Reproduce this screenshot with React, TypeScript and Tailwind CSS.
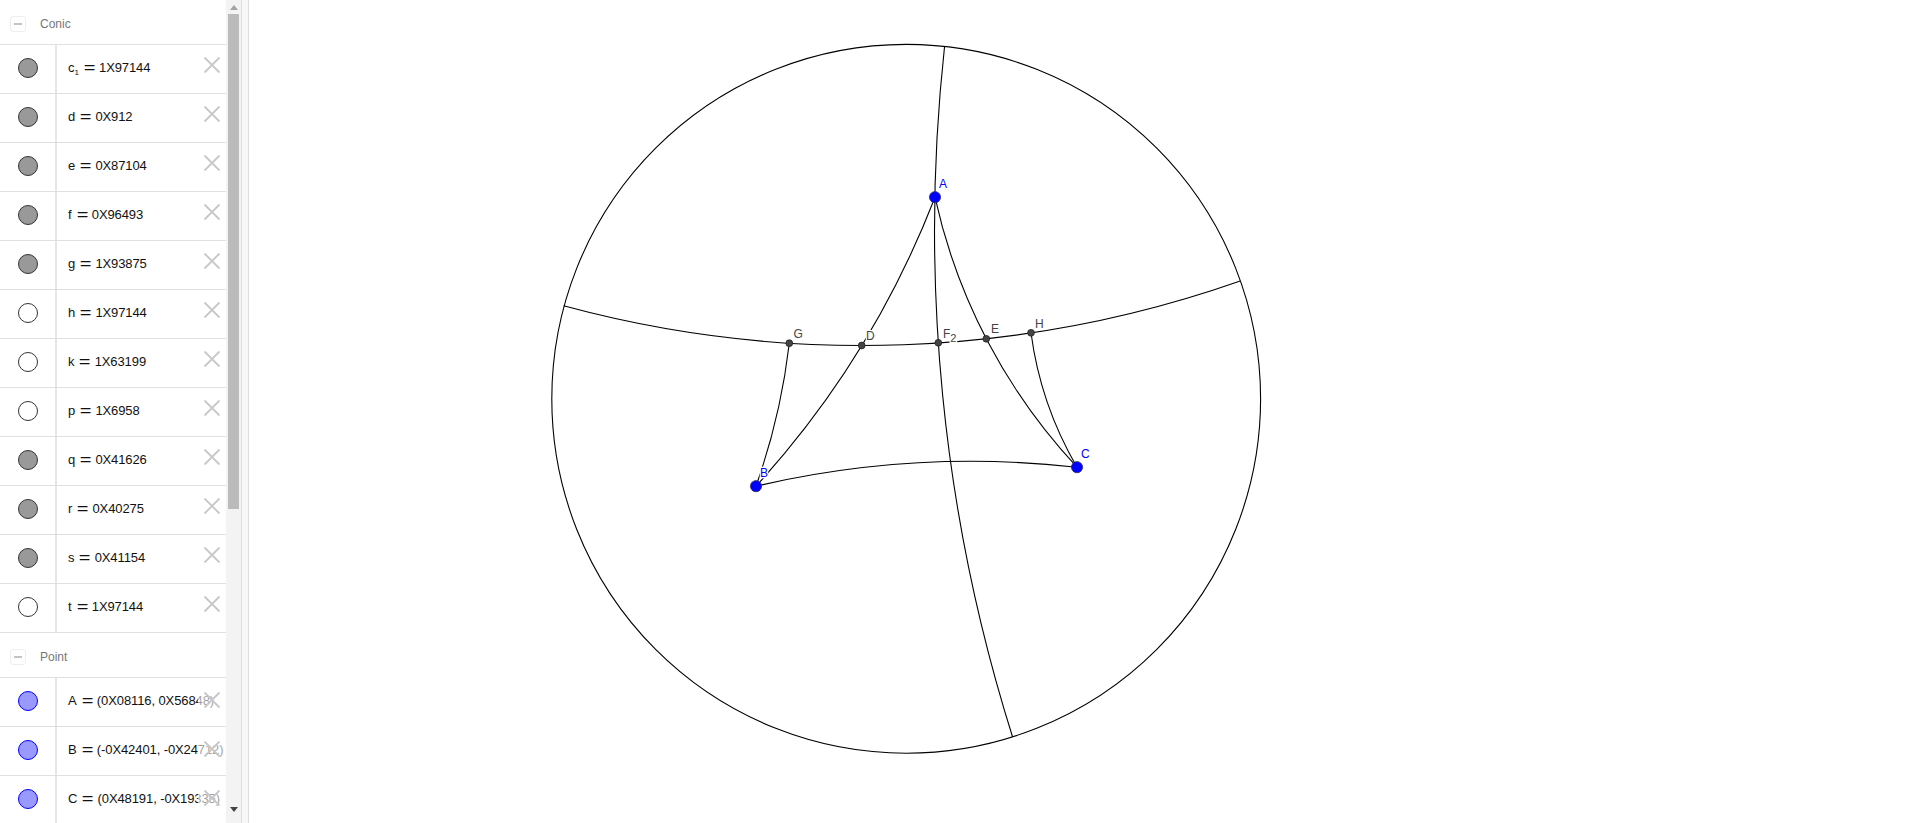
import React from "react";

type P = [number, number];

function arc(a: P, m: P, b: P): string {
  const [ax, ay] = a, [bx, by] = m, [cx, cy] = b;
  const d = 2 * (ax * (by - cy) + bx * (cy - ay) + cx * (ay - by));
  const s = (x: number, y: number) => x * x + y * y;
  const ux = (s(ax, ay) * (by - cy) + s(bx, by) * (cy - ay) + s(cx, cy) * (ay - by)) / d;
  const uy = (s(ax, ay) * (cx - bx) + s(bx, by) * (ax - cx) + s(cx, cy) * (bx - ax)) / d;
  const r = Math.hypot(ax - ux, ay - uy);
  const cross = (bx - ax) * (cy - ay) - (by - ay) * (cx - ax);
  return `M${ax} ${ay}A${r} ${r} 0 0 ${cross > 0 ? 1 : 0} ${cx} ${cy}`;
}

const A: P = [935, 197.2];
const B: P = [756, 486.2];
const C: P = [1077, 467.2];
const G: P = [789.3, 343.2];
const D: P = [861.7, 345.5];
const F: P = [938.3, 342.8];
const E: P = [986.3, 338.8];
const H: P = [1031, 332.8];

const geodesics: [P, P, P][] = [
  [[944.6, 46], F, [1012.6, 737]],
  [[563.6, 305.8], D, [1240.2, 281]],
  [A, D, B],
  [A, E, C],
  [B, [943, 461.8], C],
  [G, [780, 400.5], B],
  [H, [1046.7, 400.5], C],
];

type Row = { name: React.ReactNode; value: string; kind: "gray" | "white" | "blue" };

const conics: Row[] = [
  { name: <>c<sub className="text-[8px] align-baseline relative top-[3px]">1</sub></>, value: "1X97144", kind: "gray" },
  { name: "d", value: "0X912", kind: "gray" },
  { name: "e", value: "0X87104", kind: "gray" },
  { name: "f", value: "0X96493", kind: "gray" },
  { name: "g", value: "1X93875", kind: "gray" },
  { name: "h", value: "1X97144", kind: "white" },
  { name: "k", value: "1X63199", kind: "white" },
  { name: "p", value: "1X6958", kind: "white" },
  { name: "q", value: "0X41626", kind: "gray" },
  { name: "r", value: "0X40275", kind: "gray" },
  { name: "s", value: "0X41154", kind: "gray" },
  { name: "t", value: "1X97144", kind: "white" },
];

const points: Row[] = [
  { name: "A", value: "(0X08116, 0X56848)", kind: "blue" },
  { name: "B", value: "(-0X42401, -0X24712)", kind: "blue" },
  { name: "C", value: "(0X48191, -0X19335)", kind: "blue" },
];

function Marble({ kind }: { kind: Row["kind"] }) {
  if (kind === "gray") return <div className="w-5 h-5 rounded-full bg-[#999999] border border-[#333333]" />;
  if (kind === "white") return <div className="w-5 h-5 rounded-full bg-white border border-[#333333]" />;
  return <div className="w-5 h-5 rounded-full bg-[#9999ff] border border-[#0000ff]" />;
}

function Item({ row }: { row: Row }) {
  const isPoint = row.kind === "blue";
  return (
    <div className="relative flex h-[49px] border-b border-[#e0e0e0] overflow-hidden">
      <div className="w-[57px] shrink-0 flex items-center justify-center border-r-2 border-[#e6e6e6] pl-[1px] pb-[2px]">
        <Marble kind={row.kind} />
      </div>
      <div className="flex items-center pl-[11px] pb-[2px] whitespace-nowrap text-[13px] tracking-[-0.1px] text-[#111111]">
        <span>{row.name}</span>
        <span className="ml-[6px] mr-[5px] text-[16px] leading-none scale-x-125">=</span>
        <span>{row.value}</span>
      </div>
      <div className={`absolute left-[198px] w-[27px] h-[22px] flex items-center justify-center bg-white/60 ${isPoint ? "top-[11px]" : "top-[9px]"}`}>
        <svg width="20" height="20" viewBox="0 0 20 20" fill="none" stroke="#c8c8c8" strokeWidth="1.8">
          <path d="M2.5 2.5L17.5 17.5M17.5 2.5L2.5 17.5" />
        </svg>
      </div>
    </div>
  );
}

function Header({ title, h }: { title: string; h: string }) {
  return (
    <div className={`flex items-center border-b border-[#e0e0e0] pt-[3px] ${h}`}>
      <div className="ml-[10px] w-4 h-4 rounded-[3px] border border-[#eeeeee] flex items-center justify-center">
        <div className="w-2 h-[2px] bg-[#c4c4c4]" />
      </div>
      <span className="ml-[14px] text-[12px] text-[#777777]">{title}</span>
    </div>
  );
}

function Label({ p, t, color, sub }: { p: P; t: string; color: string; sub?: string }) {
  return (
    <text
      x={p[0]}
      y={p[1]}
      fill={color}
      fontSize="12"
      stroke="white"
      strokeWidth="2.5"
      className="[paint-order:stroke]"
    >
      {t}
      {sub && (
        <tspan fontSize="11" dy="4">
          {sub}
        </tspan>
      )}
    </text>
  );
}

export default function App() {
  return (
    <div className="flex h-screen w-full overflow-hidden bg-white font-['Liberation_Sans',sans-serif]">
      <div className="w-[226px] shrink-0 overflow-hidden">
        <Header title="Conic" h="h-[45px]" />
        {conics.map((r, i) => (
          <Item key={i} row={r} />
        ))}
        <Header title="Point" h="h-[45px]" />
        {points.map((r, i) => (
          <Item key={i} row={r} />
        ))}
      </div>

      <div className="w-[15px] shrink-0 bg-[#f3f3f3] flex flex-col items-center relative">
        <div className="h-[14px] flex items-center justify-center">
          <div className="w-0 h-0 border-x-[4px] border-x-transparent border-b-[5px] border-b-[#a3a3a3]" />
        </div>
        <div className="w-[11px] h-[495px] bg-[#bbbbbb]" />
        <div className="flex-1" />
        <div className="h-[16px] flex items-start justify-center">
          <div className="w-0 h-0 border-x-[4px] border-x-transparent border-t-[5px] border-t-[#444444]" />
        </div>
      </div>

      <div className="w-[8px] shrink-0 bg-[#f7f7f7] border-x border-[#dddddd]" />

      <div className="flex-1 min-w-0">
        <svg className="block w-full h-full font-['Liberation_Sans',sans-serif]" viewBox="249 0 1664 823">
          <circle cx="906.2" cy="398.8" r="354.4" fill="none" stroke="#000000" strokeWidth="1.1" />
          {geodesics.map((g, i) => (
            <path key={i} d={arc(g[0], g[1], g[2])} fill="none" stroke="#000000" strokeWidth="1.1" />
          ))}
          <Label p={[939, 188]} t="A" color="#0000ff" />
          <Label p={[760, 477]} t="B" color="#0000ff" />
          <Label p={[1081, 458]} t="C" color="#0000ff" />
          <Label p={[793.5, 338]} t="G" color="#444444" />
          <Label p={[866, 340]} t="D" color="#444444" />
          <Label p={[943, 337.5]} t="F" color="#444444" sub="2" />
          <Label p={[991, 333]} t="E" color="#444444" />
          <Label p={[1035, 328]} t="H" color="#444444" />
          {[G, D, F, E, H].map((p, i) => (
            <circle key={i} cx={p[0]} cy={p[1]} r="3.4" fill="#444444" stroke="#222222" strokeWidth="0.8" />
          ))}
          {[A, B, C].map((p, i) => (
            <circle key={i} cx={p[0]} cy={p[1]} r="5.6" fill="#0000ff" stroke="#333366" strokeWidth="0.8" />
          ))}
        </svg>
      </div>
    </div>
  );
}
